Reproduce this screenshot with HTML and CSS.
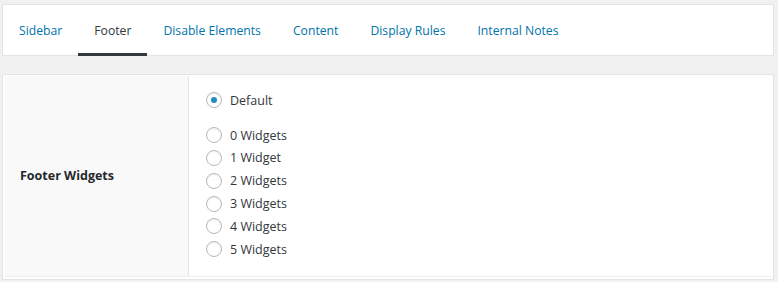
FILE: index.html
```html
<!DOCTYPE html>
<html lang="en">
<head>
    <meta charset="UTF-8">
    <meta name="viewport" content="width=device-width, initial-scale=1.0">
    <title>Layout Settings - Footer</title>
    <link rel="stylesheet" href="styles.css">
</head>
<body>
    <div class="tabs">
        <a href="#" class="tab">Sidebar</a>
        <a href="#" class="tab active">Footer</a>
        <a href="#" class="tab">Disable Elements</a>
        <a href="#" class="tab">Content</a>
        <a href="#" class="tab">Display Rules</a>
        <a href="#" class="tab">Internal Notes</a>
    </div>

    <div class="panel">
        <div class="setting-row">
            <div class="setting-label">Footer Widgets</div>
            <div class="setting-options">
                <label class="radio-item default-item">
                    <input type="radio" name="footerWidgets" value="default" checked>
                    <span>Default</span>
                </label>
                <label class="radio-item">
                    <input type="radio" name="footerWidgets" value="0">
                    <span>0 Widgets</span>
                </label>
                <label class="radio-item">
                    <input type="radio" name="footerWidgets" value="1">
                    <span>1 Widget</span>
                </label>
                <label class="radio-item">
                    <input type="radio" name="footerWidgets" value="2">
                    <span>2 Widgets</span>
                </label>
                <label class="radio-item">
                    <input type="radio" name="footerWidgets" value="3">
                    <span>3 Widgets</span>
                </label>
                <label class="radio-item">
                    <input type="radio" name="footerWidgets" value="4">
                    <span>4 Widgets</span>
                </label>
                <label class="radio-item">
                    <input type="radio" name="footerWidgets" value="5">
                    <span>5 Widgets</span>
                </label>
            </div>
        </div>
    </div>
</body>
</html>
```

FILE: styles.css
```css
body {
    margin: 0;
    padding: 4px 4px 0 2px;
    background-color: #f1f1f1;
    font-family: "Open Sans", Arial, sans-serif;
    font-size: 12.5px;
    color: #32373c;
}

.tabs {
    display: flex;
    height: 50px;
    background-color: #ffffff;
    border: 1px solid #e2e4e7;
    margin-bottom: 18px;
}

.tab {
    display: flex;
    align-items: center;
    padding: 3px 16px 0 16px;
    font-size: 12.2px;
    color: #0073aa;
    text-decoration: none;
    border-bottom: 3px solid transparent;
    margin-bottom: -1px;
}

.tab.active {
    color: #32373c;
    border-bottom-color: #32373c;
}

.panel {
    background-color: #ffffff;
    border: 1px solid #e2e4e7;
    padding: 1px 2px 2px 2px;
}

.setting-row {
    display: flex;
    border-bottom: 1px solid #eeeeee;
}

.setting-label {
    width: 168px;
    padding-left: 15px;
    display: flex;
    align-items: center;
    background-color: #f9f9f9;
    border-right: 1px solid #e5e5e5;
    font-weight: bold;
    color: #23282d;
}

.setting-options {
    display: flex;
    flex-direction: column;
    padding: 13px 17px 15px 17px;
}

.radio-item {
    display: flex;
    align-items: center;
    gap: 8px;
    height: 22.8px;
    cursor: pointer;
}

.default-item {
    margin-bottom: 12px;
}

.radio-item input {
    appearance: none;
    -webkit-appearance: none;
    margin: 0;
    width: 16px;
    height: 16px;
    border: 1px solid #b4b9be;
    border-radius: 50%;
    background-color: #ffffff;
    box-shadow: inset 0 1px 2px rgba(0, 0, 0, 0.07);
    display: flex;
    align-items: center;
    justify-content: center;
}

.radio-item input:checked::before {
    content: "";
    width: 6px;
    height: 6px;
    border-radius: 50%;
    background-color: #1e8cbe;
}
```
